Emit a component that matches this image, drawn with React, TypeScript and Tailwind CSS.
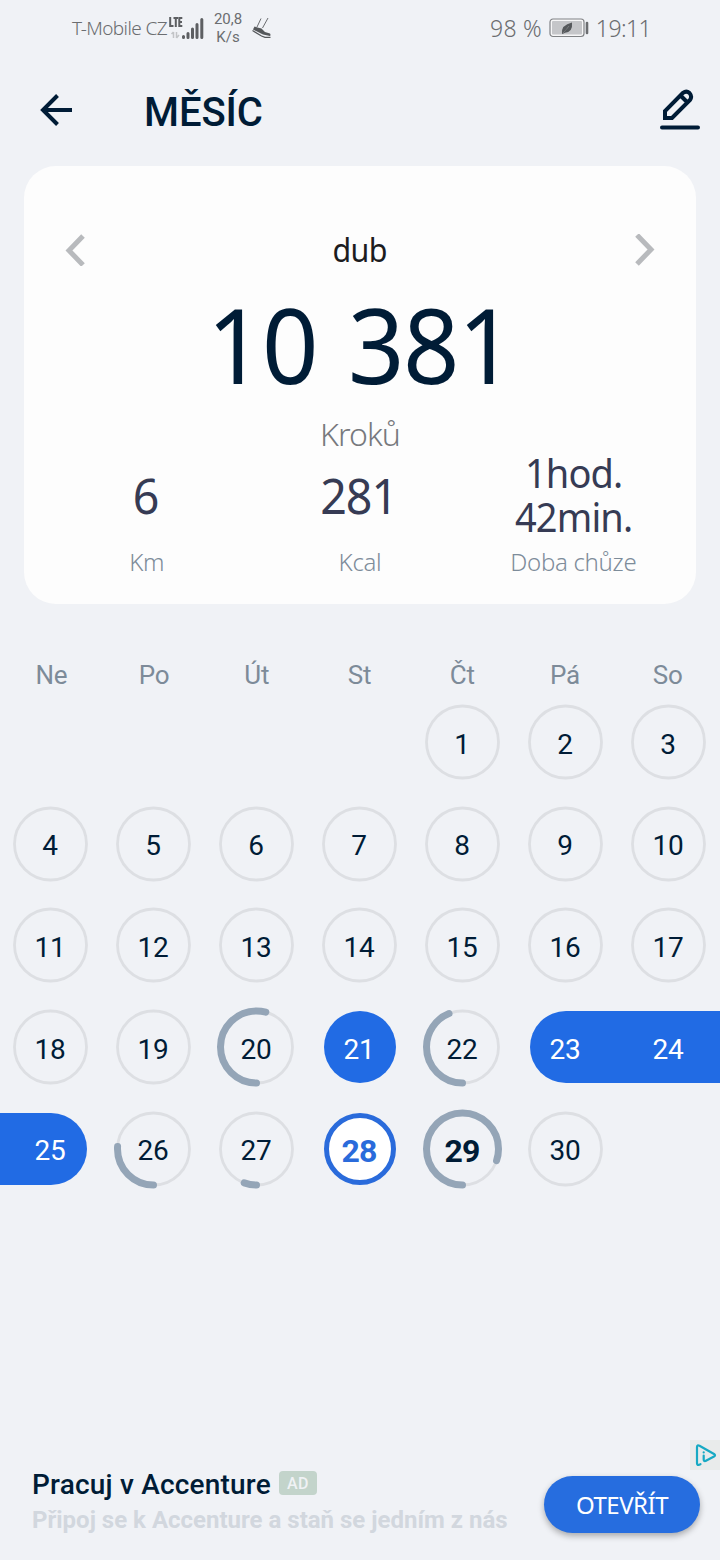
import React from "react";
import { clsx } from "clsx";

interface Day {
  day: number;
  // how much of the ring is filled, in degrees
  sweep?: number;
  kind?: "done" | "selected" | "today" | "streakStart" | "streakMiddle" | "streakEnd";
}

const weekdays = ["Ne", "Po", "Út", "St", "Čt", "Pá", "So"];

const firstWeekday = 4;

const special: Record<number, Omit<Day, "day">> = {
  20: { sweep: 195 },
  21: { kind: "done" },
  22: { sweep: 158 },
  23: { kind: "streakStart" },
  24: { kind: "streakMiddle" },
  25: { kind: "streakEnd" },
  26: { sweep: 94 },
  27: { sweep: 20 },
  28: { kind: "selected" },
  29: { sweep: 289, kind: "today" },
};

const days: Day[] = Array.from({ length: 30 }, (_, i) => ({ day: i + 1, ...special[i + 1] }));

const StatusBar = () => (
  <div className="flex h-14 items-center pl-[72px] pr-[69px] text-[#6b6d70]">
    <span className="w-[97px] whitespace-nowrap text-[19px] font-light tracking-[-0.6px]">T-Mobile CZ</span>
    {/* Signal strength */}
    <svg className="h-[26px] w-9 shrink-0" viewBox="0 0 36 26">
      <g fill="none" stroke="#5d5f62" strokeWidth="2">
        <path d="M1.200 2v9h3.300M4.500 3h4.500M6.800 3v9M13.300 3h-3v8h3M10.300 7h2.700" />
      </g>
      <path d="M4.500 17v6M4.500 17l-2 2M7.500 17v6M7.500 23l2.500-3" stroke="#c2c4c7" strokeWidth="1.500" fill="none" />
      <path d="M14.500 21.500v1M19 18.500v4M23.500 14v8.500M28 9.500v13M32.800 4.500v18" stroke="#5d5f62" strokeWidth="3" strokeLinecap="round" />
    </svg>
    <div className="ml-[5px] w-9 text-center font-[Roboto,sans-serif] text-[15px] leading-[18px]">
      <div>20,8</div>
      <div>K/s</div>
    </div>
    <svg className="ml-[6px] h-[22px] w-[21px] shrink-0" viewBox="0 0 21 22">
      <path d="M9 1.500L5 10M16 1L10.500 11" stroke="#6b6d70" strokeWidth="1" fill="none" />
      <path d="M2.500 9.500L5.500 10.500L9.500 11.500L13 15L18 16.500Q19 18 18 19L11 17.500L1 12.500Z" fill="#55585b" />
      <path d="M0.500 13.500L9.500 19L13 20.300H18.500" stroke="#55585b" strokeWidth="1.300" fill="none" />
    </svg>
    <span className="ml-auto whitespace-nowrap text-[23px] font-light tracking-[0.2px]">98 %</span>
    <svg className="ml-[7px] h-5 w-10 shrink-0" viewBox="0 0 40 20">
      <rect x="1" y="1" width="34" height="17.500" rx="3" fill="#f6f6f7" stroke="#808285" strokeWidth="1.200" />
      <rect x="3" y="3" width="30" height="13.500" rx="1" fill="#c5c6c9" />
      <path d="M13 15.500Q12 7 23 4.500Q24 14 16 14.800L13.500 16Z" fill="#55585b" />
      <path d="M14 15Q17 12 20 8" stroke="#8d8f92" strokeWidth="0.700" />
      <path d="M38 5v10" stroke="#6b6d70" strokeWidth="2.600" strokeLinecap="round" />
    </svg>
    <span className="ml-[7px] whitespace-nowrap text-[23px] font-light tracking-[-0.6px]">19:11</span>
  </div>
);

const Header = () => (
  <header className="flex h-[110px] items-center pl-10 pr-5 text-[#001c36]">
    <svg className="mb-[2px] h-8 w-8" viewBox="0 0 32 32" fill="none" stroke="currentColor" strokeWidth="4">
      <path d="M17.500 1.500L3 16L17.500 30.500M3 16H32" />
    </svg>
    <h1 className="ml-[72px] pt-[3px] font-[Roboto,sans-serif] text-[40px] font-medium leading-[48px] tracking-[-0.1px]">MĚSÍC</h1>
    <svg className="mb-1 ml-auto h-[42px] w-10" viewBox="0 0 40 42" fill="none" stroke="currentColor" strokeWidth="4">
      <path d="M5 30V23L23 4.800Q26.500 2.300 29.500 5Q32.500 8.500 30 12L12 30ZM20.500 7.500L27.500 14.500" />
      <path d="M2 39.500H38" strokeLinecap="round" />
    </svg>
  </header>
);

interface StatProps {
  label: string;
  children: React.ReactNode;
  small?: boolean;
}

const Stat = ({ label, children, small = false }: StatProps) => (
  <div className="text-center">
    <div
      className={clsx(
        "flex h-[81px] scale-x-95 flex-col items-center justify-center whitespace-nowrap text-[#363b54]",
        small ? "text-[40px] leading-[44px] tracking-[-0.9px]" : "pr-[2px] text-[49px] leading-[56px] tracking-[-1px]"
      )}
    >
      {children}
    </div>
    <div className="text-[24px] font-light leading-[53px] tracking-[-0.3px] text-[#7d8c9a]">{label}</div>
  </div>
);

const SummaryCard = () => (
  <section className="mx-6 h-[438px] rounded-[32px] bg-[#fdfdfd] px-4 pt-[60px]">
    <div className="flex h-12 items-center justify-between px-[25px] text-[#b8babd]">
      <svg className="h-8 w-5" viewBox="0 0 20 32" fill="none" stroke="currentColor" strokeWidth="5">
        <path d="M18 2L4 16.500L18 31" />
      </svg>
      <span className="scale-x-95 text-[32px] leading-[48px] tracking-[-0.6px] text-[#1c1c1e]">dub</span>
      <svg className="h-8 w-5" viewBox="0 0 20 32" fill="none" stroke="currentColor" strokeWidth="5">
        <path d="M2 1L16 15.500L2 30" />
      </svg>
    </div>
    <div className="scale-x-95 text-center text-[104px] leading-[139px] tracking-[-1.6px] text-[#001c36] [word-spacing:7px]">
      10 381
    </div>
    <div className="text-center text-[32px] font-light leading-[41px] tracking-[-0.9px] text-[#77797d]">Kroků</div>
    <div className="grid grid-cols-3">
      <Stat label="Km">6</Stat>
      <Stat label="Kcal">281</Stat>
      <Stat label="Doba chůze" small>
        <p>
          1hod.
          <br />
          42min.
        </p>
      </Stat>
    </div>
  </section>
);

const Ring = ({ sweep }: { sweep?: number }) => (
  <svg className="col-start-1 row-start-1 h-20 w-[81px]" viewBox="-40.5 -40 81 80" fill="none">
    <circle r="36" stroke="#dddfe3" strokeWidth="2.800" />
    {sweep && (
      <circle
        r="36"
        stroke="#94a5b7"
        strokeWidth="7"
        strokeLinecap="round"
        pathLength={360}
        strokeDasharray={`${sweep} 360`}
        transform="rotate(90)"
      />
    )}
  </svg>
);

const DayCell = ({ day, sweep, kind }: Day) => {
  const hasRing = !kind || kind === "today";
  return (
    <div className="grid h-[101.7px] place-items-center">
      {hasRing && <Ring sweep={sweep} />}
      {kind === "done" && <div className="col-start-1 row-start-1 size-[72px] rounded-full bg-[#216be4]" />}
      {kind === "selected" && (
        <div className="col-start-1 row-start-1 size-[72px] rounded-full border-[5px] border-[#2a6bdb] bg-white" />
      )}
      {kind === "streakStart" && (
        <div className="col-start-1 row-start-1 h-[72px] w-[87.5px] justify-self-end rounded-l-full bg-[#216be4]" />
      )}
      {kind === "streakMiddle" && <div className="col-start-1 row-start-1 h-[72px] w-full bg-[#216be4]" />}
      {kind === "streakEnd" && (
        <div className="col-start-1 row-start-1 h-[72px] w-[88px] justify-self-start rounded-r-full bg-[#216be4]" />
      )}
      <span
        className={clsx(
          "z-10 col-start-1 row-start-1 pr-px pt-[5.6px] leading-8",
          kind === "selected" || kind === "today" ? "text-[32px] font-bold tracking-[-0.8px]" : "text-[28px] tracking-[-0.3px]",
          hasRing && "text-[#001c36]",
          kind === "selected" && "text-[#2a6bdb]",
          !hasRing && kind !== "selected" && "text-white"
        )}
      >
        {day}
      </span>
    </div>
  );
};

const Calendar = () => (
  <section className="mt-[55px] font-[Roboto,sans-serif]">
    <div className="grid grid-cols-7 pr-px text-center text-[26px] leading-8 tracking-[-0.2px] text-[#7d8b99]">
      {weekdays.map((name) => (
        <div key={name}>{name}</div>
      ))}
    </div>
    <div className="-ml-px grid w-[721px] grid-cols-7">
      {Array.from({ length: firstWeekday }, (_, i) => (
        <div key={`empty-${i}`} />
      ))}
      {days.map((d) => (
        <DayCell key={d.day} {...d} />
      ))}
    </div>
  </section>
);

const AdBanner = () => (
  <footer className="relative mt-auto flex h-[120px] items-start pl-8 pr-5 pt-7 font-[Roboto,sans-serif]">
    <div className="whitespace-nowrap">
      <div className="flex items-center">
        <span className="pt-px text-[28px] font-medium leading-8 tracking-[0.2px] text-[#001c36]">Pracuj v Accenture</span>
        <span className="mb-[3px] ml-2 flex h-6 w-[38px] items-center justify-center rounded-[4px] bg-[#c3d4cb] pt-[2px] text-[16px] font-medium tracking-[0.5px] text-[#f0f2f5]">
          AD
        </span>
      </div>
      <div className="mt-[3px] text-[24px] font-bold leading-8 text-[#d2d7de]">Připoj se k Accenture a staň se jedním z nás</div>
    </div>
    <button className="ml-auto mt-2 h-[57px] w-[156px] rounded-full bg-[#266ddf] font-['Noto_Sans',sans-serif] text-[24px] tracking-[-0.5px] text-white shadow-[0_3px_6px_rgba(0,0,0,0.3)]">
      OTEVŘÍT
    </button>
    {/* AdChoices marker */}
    <div className="absolute right-0 top-0 size-[30px] bg-[#e9ebeb]">
      <svg className="size-[30px]" viewBox="0 0 30 30" fill="none" stroke="#18a9c4" strokeWidth="2.200" strokeLinecap="round" strokeLinejoin="round">
        <path d="M10.500 24.200L8.500 25Q7 25 7 23V7Q7 4.500 9.500 5.800L24 14Q26 15.300 24 16.500L15.500 21Q13.700 21.500 13.700 19.500V15.500" />
        <path d="M13.700 12.300v.2" />
      </svg>
    </div>
  </footer>
);

const App = () => (
  <div className="flex h-[1560px] w-[720px] flex-col overflow-hidden bg-[#f0f2f6] font-['Noto_Sans',sans-serif]">
    <StatusBar />
    <Header />
    <SummaryCard />
    <Calendar />
    <AdBanner />
  </div>
);

export default App;
